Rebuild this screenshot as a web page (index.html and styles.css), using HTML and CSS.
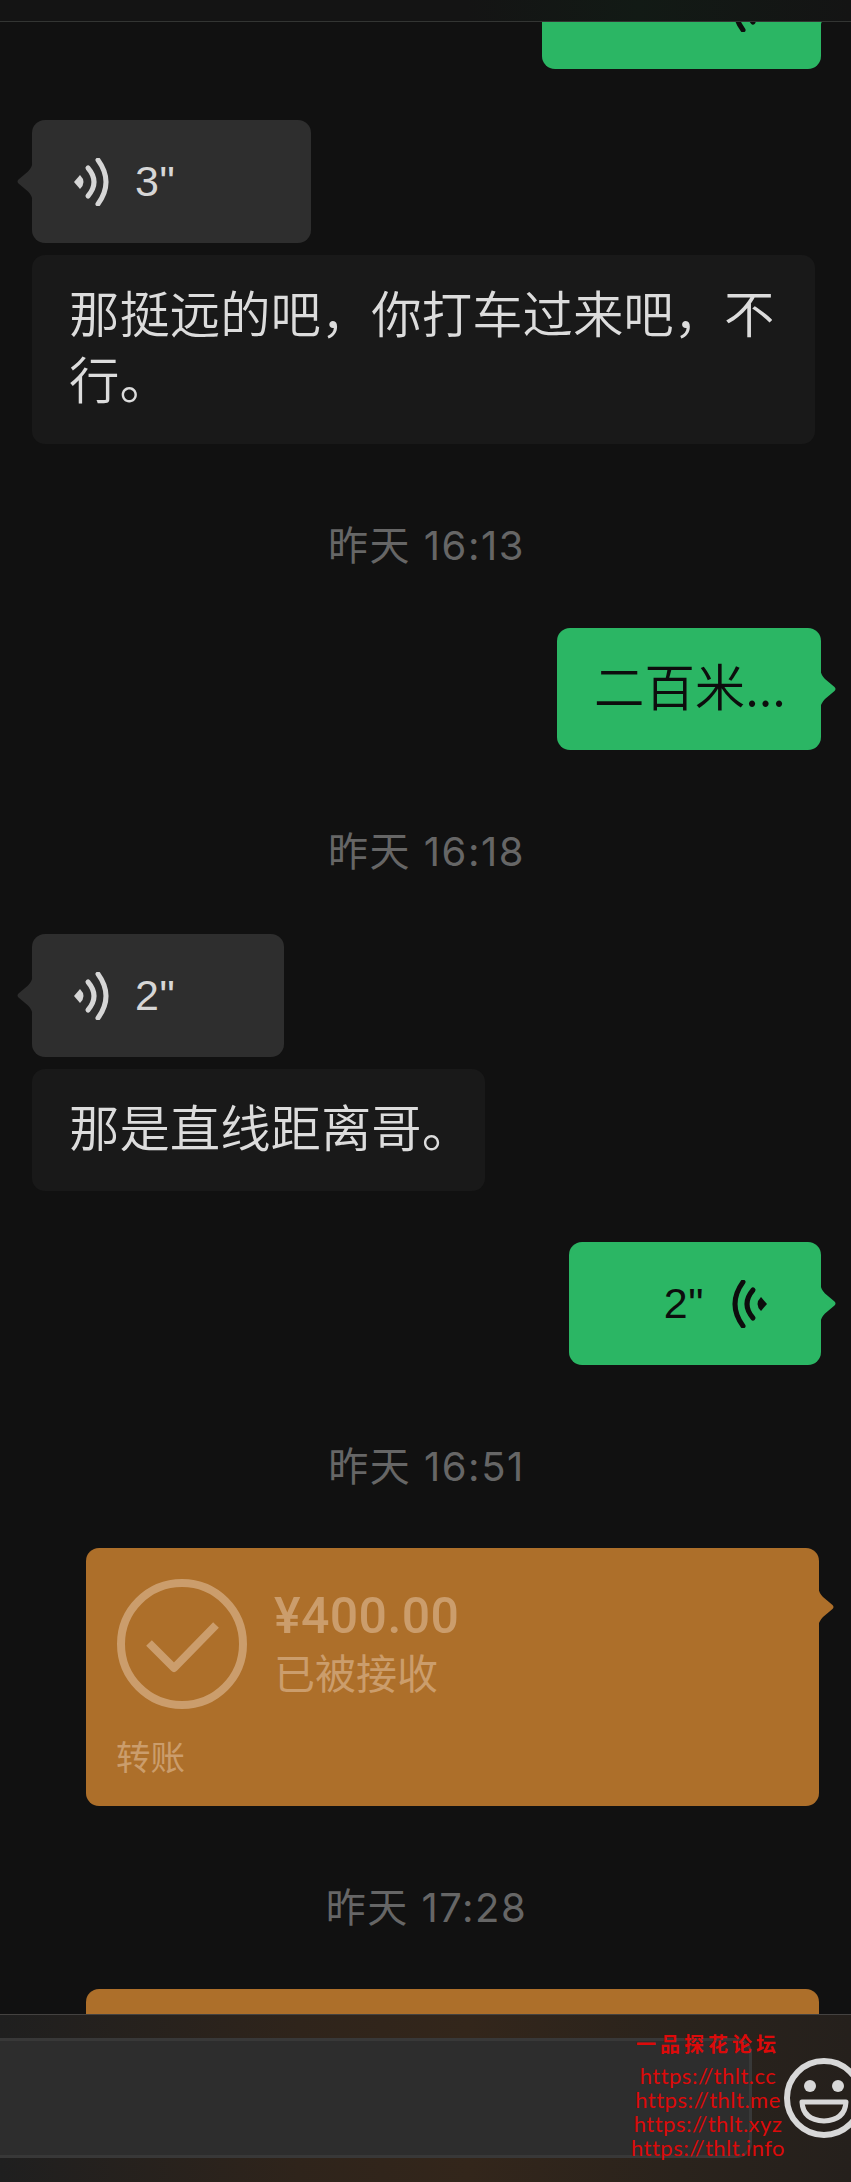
FILE: index.html
```html
<!DOCTYPE html>
<html lang="zh-CN">
<head>
<meta charset="utf-8">
<title>聊天</title>
<link rel="stylesheet" href="styles.css">
</head>
<body>
<div class="screen">
  <div class="topbar"></div>
  <main class="chat">
    <div class="row out first">
      <div class="bubble voice green v3">
        <span class="dur">3"</span>
        <svg class="wave flip" viewBox="0 0 36 48"><path class="dot" d="M0 24 6 17Q9.5 20.5 9.5 24T6 31Z"/><path d="M14 10Q26 24 14 38"/><path d="M24 2Q40 24 24 46"/></svg>
      </div>
    </div>
    <div class="row in gap-l">
      <div class="bubble voice grey v3">
        <svg class="wave" viewBox="0 0 36 48"><path class="dot" d="M0 24 6 17Q9.5 20.5 9.5 24T6 31Z"/><path d="M14 10Q26 24 14 38"/><path d="M24 2Q40 24 24 46"/></svg>
        <span class="dur">3"</span>
      </div>
    </div>
    <div class="row in gap-s">
      <div class="bubble text dark wide">那挺远的吧，你打车过来吧，不行。</div>
    </div>
    <div class="time">昨天 16:13</div>
    <div class="row out">
      <div class="bubble text green sent">二百米...</div>
    </div>
    <div class="time">昨天 16:18</div>
    <div class="row in">
      <div class="bubble voice grey v2">
        <svg class="wave" viewBox="0 0 36 48"><path class="dot" d="M0 24 6 17Q9.5 20.5 9.5 24T6 31Z"/><path d="M14 10Q26 24 14 38"/><path d="M24 2Q40 24 24 46"/></svg>
        <span class="dur">2"</span>
      </div>
    </div>
    <div class="row in gap-s">
      <div class="bubble text dark line">那是直线距离哥。</div>
    </div>
    <div class="row out gap-m">
      <div class="bubble voice green v2">
        <span class="dur">2"</span>
        <svg class="wave flip" viewBox="0 0 36 48"><path class="dot" d="M0 24 6 17Q9.5 20.5 9.5 24T6 31Z"/><path d="M14 10Q26 24 14 38"/><path d="M24 2Q40 24 24 46"/></svg>
      </div>
    </div>
    <div class="time tight">昨天 16:51</div>
    <div class="row out">
      <div class="transfer">
        <div class="t-main">
          <svg class="t-check" viewBox="0 0 130 130"><circle cx="65" cy="65" r="61"/><path d="M32 64 57 89 99 46"/></svg>
          <div class="t-info">
            <div class="t-amount">¥400.00</div>
            <div class="t-status">已被接收</div>
          </div>
        </div>
        <div class="t-label">转账</div>
      </div>
    </div>
    <div class="time tight">昨天 17:28</div>
    <div class="row out">
      <div class="transfer"></div>
    </div>
  </main>
  <footer class="inputbar">
    <div class="field"></div>
    <svg class="emoji" viewBox="0 0 80 80"><circle class="face" cx="40" cy="40" r="37"/><circle class="eye" cx="26" cy="28" r="6"/><circle class="eye" cx="54" cy="28" r="6"/><path class="mouth" d="M18 44H62Q61 62 40 63 19 62 18 44Z"/></svg>
  </footer>
  <aside class="mark">
    <div class="mark-title">一品探花论坛</div>
    <div>https://thlt.cc</div>
    <div>https://thlt.me</div>
    <div>https://thlt.xyz</div>
    <div>https://thlt.info</div>
  </aside>
</div>
</body>
</html>
```
FILE: styles.css
```css
* { box-sizing: border-box; }
html, body { margin: 0; padding: 0; background: #111111; }
.screen {
  position: relative;
  width: 851px;
  height: 2182px;
  overflow: hidden;
  background: #111111;
  font-family: "Noto Sans CJK SC", "Liberation Sans", sans-serif;
}
.topbar {
  position: absolute;
  top: 0;
  left: 0;
  right: 0;
  height: 22px;
  z-index: 2;
  background: linear-gradient(90deg, #141414 0%, #141414 55%, #121a15 75%, #141414 100%);
  border-bottom: 1px solid #333533;
}
.chat {
  display: flex;
  flex-direction: column;
  padding: 0 30px 0 32px;
  margin-top: -54px;
}
.row { display: flex; }
.row.out { justify-content: flex-end; }
.row.in { justify-content: flex-start; }
.gap-l { margin-top: 51px; }
.gap-s { margin-top: 12px; }
.gap-m { margin-top: 51px; }
.time {
  height: 56px;
  line-height: 56px;
  margin: 74px 0 54px;
  text-align: center;
  font-size: 40px;
  letter-spacing: 1.5px;
  color: #666666;
  font-family: "Inter", "Noto Sans CJK SC", sans-serif;
}
.time.tight { margin-bottom: 53px; }
.bubble { position: relative; border-radius: 13px; }
.bubble.text {
  padding: 24px 37px 32px;
  font-size: 50.4px;
  font-weight: 350;
  line-height: 66px;
}
.bubble.wide { width: 783px; padding-bottom: 33px; }
.sent { width: 264px; white-space: nowrap; }
.line { width: 453px; white-space: nowrap; }
.dark { background: #191919; color: #dcdcdc; }
.grey { background: #2e2e2e; color: #d6d6d6; }
.green { background: #2bb664; color: #0d0d0d; }
.voice {
  display: flex;
  align-items: center;
  height: 123px;
  font-family: "Liberation Sans", sans-serif;
  font-size: 43px;
  letter-spacing: 0.5px;
}
.grey.voice { padding-left: 42px; gap: 25px; justify-content: flex-start; }
.green.voice { padding-right: 54px; gap: 27px; justify-content: flex-end; }
.v3 { width: 279px; }
.v2 { width: 252px; }
.wave {
  width: 36px;
  height: 48px;
  flex: none;
  fill: none;
  stroke: currentColor;
  stroke-width: 5;
  stroke-linecap: round;
}
.wave .dot { fill: currentColor; stroke: none; }
.flip { transform: scaleX(-1); }
.grey::before, .green::before, .transfer::before {
  content: "";
  position: absolute;
  top: 50%;
  width: 16px;
  height: 40px;
  margin-top: -20px;
  background: inherit;
  clip-path: path("M0 0Q1 6 5 10L14.5 18Q16.5 20 14.5 22L5 30Q1 34 0 40Z");
}
.grey::before { left: -15px; transform: scaleX(-1); }
.green::before { right: -15px; }
.transfer {
  position: relative;
  display: flex;
  flex-direction: column;
  width: 733px;
  height: 258px;
  margin-right: 2px;
  padding: 31px 31px 0;
  border-radius: 13px;
  background: #ad6f2a;
  color: #cb9d6c;
}
.transfer::before { top: 59px; right: -15px; }
.t-main { display: flex; gap: 27px; }
.t-check {
  width: 130px;
  height: 130px;
  flex: none;
  fill: none;
  stroke: #cb9d6c;
  stroke-width: 8;
}
.t-check path { stroke-linejoin: round; }
.t-info { display: flex; flex-direction: column; }
.t-amount {
  font-family: "Roboto", "Liberation Sans", sans-serif;
  font-size: 50px;
  font-weight: 500;
  letter-spacing: 0.4px;
  line-height: 58px;
  margin-top: 8px;
}
.t-status { font-size: 41px; line-height: 58px; margin-top: -3px; }
.t-label { font-size: 34.5px; line-height: 50px; margin-top: 21px; margin-left: -1px; }
.inputbar {
  position: absolute;
  left: 0;
  right: 0;
  bottom: 0;
  height: 168px;
  z-index: 2;
  display: flex;
  align-items: flex-start;
  padding-top: 23px;
  background: linear-gradient(90deg, #1f1f1f 0%, #2f241b 35%, #33261b 55%, #2a231c 80%, #25201c 100%);
  border-top: 1px solid #444240;
}
.field {
  width: 752px;
  height: 120px;
  background: #2d2d2d;
  border: 3px solid #383838;
  border-left: 0;
  border-radius: 0 15px 15px 0;
}
.emoji {
  position: absolute;
  left: 784px;
  top: 43px;
  width: 80px;
  height: 80px;
}
.face { fill: none; stroke: #d8d8d8; stroke-width: 6; }
.eye { fill: #d8d8d8; }
.mouth { fill: #2a231c; stroke: #d8d8d8; stroke-width: 5; stroke-linejoin: round; }
.mark {
  position: absolute;
  left: 621px;
  top: 2032px;
  width: 174px;
  z-index: 3;
  text-align: center;
  color: #dc0a0a;
  font-family: "Lato", sans-serif;
  font-size: 22px;
  line-height: 24px;
  letter-spacing: 0.5px;
}
.mark-title {
  font-family: "Noto Sans CJK SC", sans-serif;
  font-weight: 700;
  font-size: 20px;
  letter-spacing: 4px;
  line-height: 24px;
  margin-bottom: 8px;
}
```
